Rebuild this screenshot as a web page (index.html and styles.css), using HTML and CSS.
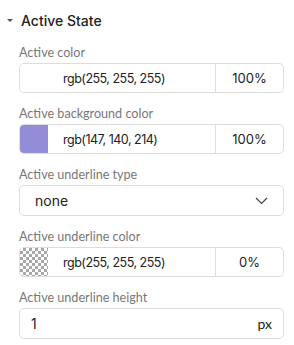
FILE: index.html
```html
<!DOCTYPE html>
<html>
<head>
  <title>Active State</title>
  <meta charset="UTF-8">
  <link rel="stylesheet" href="styles.css">
</head>
<body>
  <div class="panel">
    <div class="panel-head">
      <span class="caret"></span>
      <span class="panel-title">Active State</span>
    </div>

    <div class="field">
      <label>Active color</label>
      <div class="color-box">
        <span class="swatch" style="background-color: rgb(255, 255, 255)"></span>
        <span class="color-value">rgb(255, 255, 255)</span>
        <span class="alpha">100%</span>
      </div>
    </div>

    <div class="field">
      <label>Active background color</label>
      <div class="color-box">
        <span class="swatch" style="background-color: rgb(147, 140, 214)"></span>
        <span class="color-value">rgb(147, 140, 214)</span>
        <span class="alpha">100%</span>
      </div>
    </div>

    <div class="field">
      <label>Active underline type</label>
      <div class="select-box">
        <span class="select-value">none</span>
        <svg class="chevron" width="13" height="8" viewBox="0 0 13 8">
          <polyline points="1,1 6.5,6.5 12,1" fill="none" stroke="#444" stroke-width="1.2"/>
        </svg>
      </div>
    </div>

    <div class="field">
      <label>Active underline color</label>
      <div class="color-box">
        <span class="swatch swatch-empty"></span>
        <span class="color-value">rgb(255, 255, 255)</span>
        <span class="alpha">0%</span>
      </div>
    </div>

    <div class="field">
      <label>Active underline height</label>
      <div class="unit-box">
        <span class="unit-value">1</span>
        <span class="unit">px</span>
      </div>
    </div>
  </div>
</body>
</html>
```

FILE: styles.css
```css
body {
  margin: 0;
  background-color: #fff;
  font-family: Inter, "Noto Sans", sans-serif;
  color: #222;
}
.panel {
  padding: 10px 10px 0 19px;
}
.panel-head {
  display: flex;
  align-items: center;
  height: 20px;
  margin-left: -12px;
  gap: 8px;
}
.caret {
  width: 0;
  height: 0;
  border-left: 3px solid transparent;
  border-right: 3px solid transparent;
  border-top: 3px solid #555;
}
.panel-title {
  font-size: 14px;
  font-weight: 500;
  color: #222;
}
.field {
  margin-top: 15px;
}
.field + .field {
  margin-top: 13px;
}
label {
  display: block;
  font-family: Lato, "Noto Sans", sans-serif;
  font-size: 12.6px;
  line-height: 16px;
  color: #777;
  margin-bottom: 2px;
}
.color-box, .select-box, .unit-box {
  display: flex;
  align-items: center;
  height: 30px;
  box-sizing: border-box;
  border: 1px solid #ddd;
  border-radius: 5px;
  font-size: 14px;
  color: #222;
  overflow: hidden;
}
.swatch {
  width: 28px;
  height: 100%;
  flex-shrink: 0;
}
.swatch-empty {
  background: repeating-conic-gradient(#a8a8a8 0 25%, #fff 0 50%) 0 0 / 6px 6px;
}
.color-value {
  flex: 1;
  padding-left: 15px;
  font-size: 12.5px;
  letter-spacing: -0.5px;
}
.alpha {
  width: 67px;
  height: 100%;
  display: flex;
  align-items: center;
  justify-content: center;
  border-left: 1px solid #ddd;
  font-size: 13px;
}
.select-box {
  height: 31px;
  justify-content: space-between;
  padding: 0 15px;
}
.chevron {
  display: block;
}
.unit-box {
  height: 31px;
  justify-content: space-between;
  padding: 0 11px;
}
.unit {
  font-family: Lato, "Noto Sans", sans-serif;
  font-size: 14px;
}
```
